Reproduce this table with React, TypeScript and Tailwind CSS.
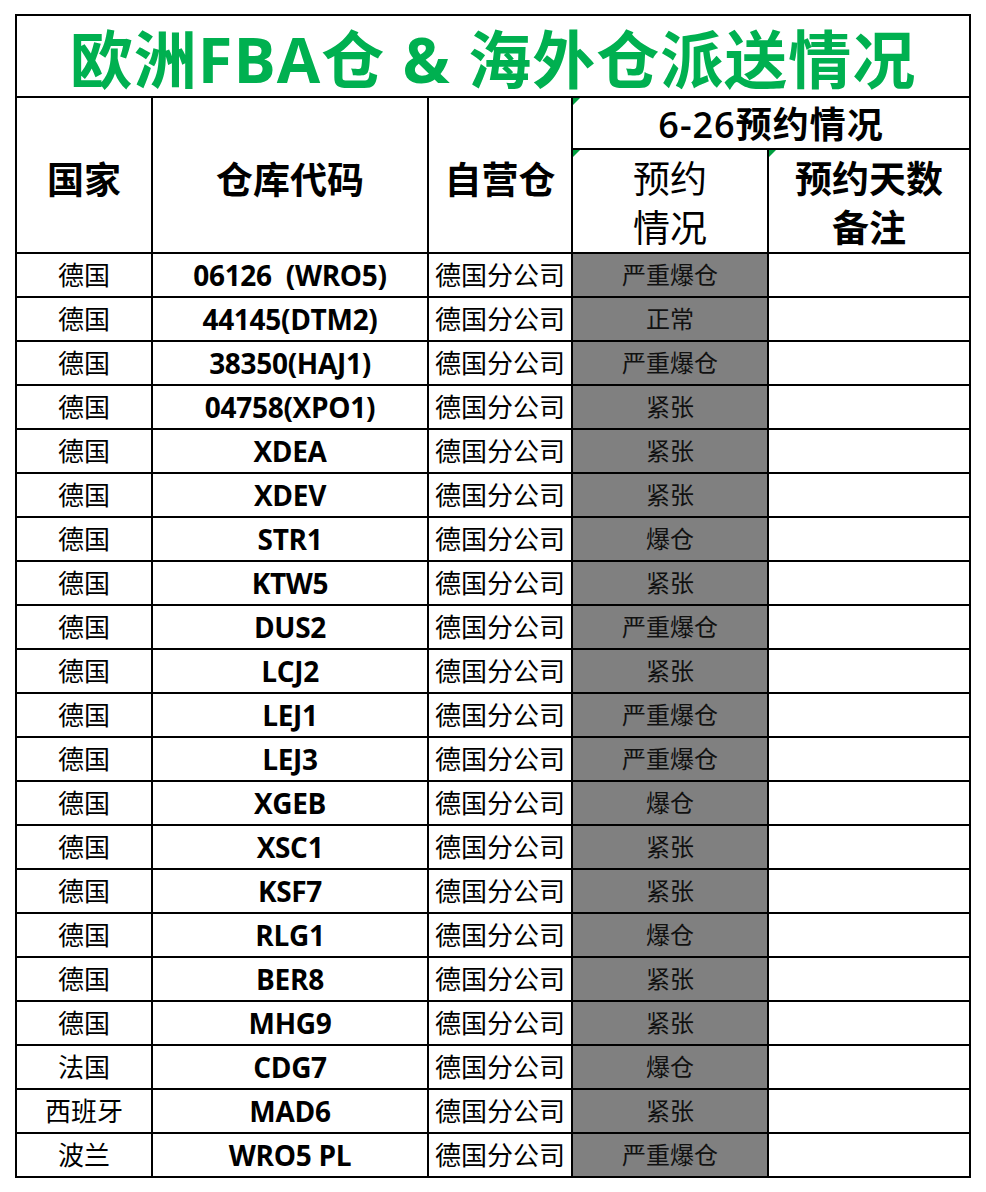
import React from "react";

type Row = { country: string; code: string; status: string };

const rows: Row[] = [
  { country: "德国", code: "06126  (WRO5)", status: "严重爆仓" },
  { country: "德国", code: "44145(DTM2)", status: "正常" },
  { country: "德国", code: "38350(HAJ1)", status: "严重爆仓" },
  { country: "德国", code: "04758(XPO1)", status: "紧张" },
  { country: "德国", code: "XDEA", status: "紧张" },
  { country: "德国", code: "XDEV", status: "紧张" },
  { country: "德国", code: "STR1", status: "爆仓" },
  { country: "德国", code: "KTW5", status: "紧张" },
  { country: "德国", code: "DUS2", status: "严重爆仓" },
  { country: "德国", code: "LCJ2", status: "紧张" },
  { country: "德国", code: "LEJ1", status: "严重爆仓" },
  { country: "德国", code: "LEJ3", status: "严重爆仓" },
  { country: "德国", code: "XGEB", status: "爆仓" },
  { country: "德国", code: "XSC1", status: "紧张" },
  { country: "德国", code: "KSF7", status: "紧张" },
  { country: "德国", code: "RLG1", status: "爆仓" },
  { country: "德国", code: "BER8", status: "紧张" },
  { country: "德国", code: "MHG9", status: "紧张" },
  { country: "法国", code: "CDG7", status: "爆仓" },
  { country: "西班牙", code: "MAD6", status: "紧张" },
  { country: "波兰", code: "WRO5 PL", status: "严重爆仓" },
];

const cell = "border-2 border-black p-0 text-center align-middle";

// little green comment marker in the cell corner
const Marker = () => (
  <span className="absolute left-0 top-0 h-0 w-0 border-t-[7px] border-r-[7px] border-t-[#00a040] border-r-transparent" />
);

export default function App() {
  return (
    <div
      className="min-h-[1192px] w-[986px] bg-white pl-[15px] pt-[14px] text-black"
      style={{ fontFamily: '"Open Sans", "Noto Sans CJK SC", sans-serif' }}
    >
      <table className="table-fixed border-collapse">
        <colgroup>
          <col className="w-[136px]" />
          <col className="w-[276px]" />
          <col className="w-[144px]" />
          <col className="w-[196px]" />
          <col className="w-[202px]" />
        </colgroup>
        <tbody>
          <tr className="h-[82px]">
            <td colSpan={5} className={cell}>
              <div className="pt-[4px] text-[63px] font-bold leading-none tracking-[1px] text-[#00b050]">
                欧洲FBA仓 &amp; 海外仓派送情况
              </div>
            </td>
          </tr>
          <tr className="h-[52px]">
            <td rowSpan={2} className={cell + " pt-[10px] text-[37px] font-bold"}>国家</td>
            <td rowSpan={2} className={cell + " pt-[10px] text-[37px] font-bold"}>仓库代码</td>
            <td rowSpan={2} className={cell + " pt-[10px] text-[37px] font-bold"}>自营仓</td>
            <td colSpan={2} className={cell + " relative text-[36px] font-semibold leading-none tracking-[1px]"}>
              <Marker />
              <span className="relative top-[2px]">6-26预约情况</span>
            </td>
          </tr>
          <tr className="h-[104px]">
            <td className={cell + " relative pt-[4px] text-[37px] leading-[49px]"}>
              <Marker />
              预约
              <br />
              情况
            </td>
            <td className={cell + " relative pt-[4px] text-[37px] font-bold leading-[49px]"}>
              <Marker />
              预约天数
              <br />
              备注
            </td>
          </tr>
          {rows.map((r, i) => (
            <tr key={i} className="h-[44px]">
              <td className={cell + " text-[26px]"}>{r.country}</td>
              <td className={cell + " whitespace-pre text-[28px] font-bold tracking-[-0.3px]"}>{r.code}</td>
              <td className={cell + " text-[26px]"}>德国分公司</td>
              <td className={cell + " bg-[#808080] text-[24px] text-[#111]"}>{r.status}</td>
              <td className={cell}></td>
            </tr>
          ))}
        </tbody>
      </table>
    </div>
  );
}
